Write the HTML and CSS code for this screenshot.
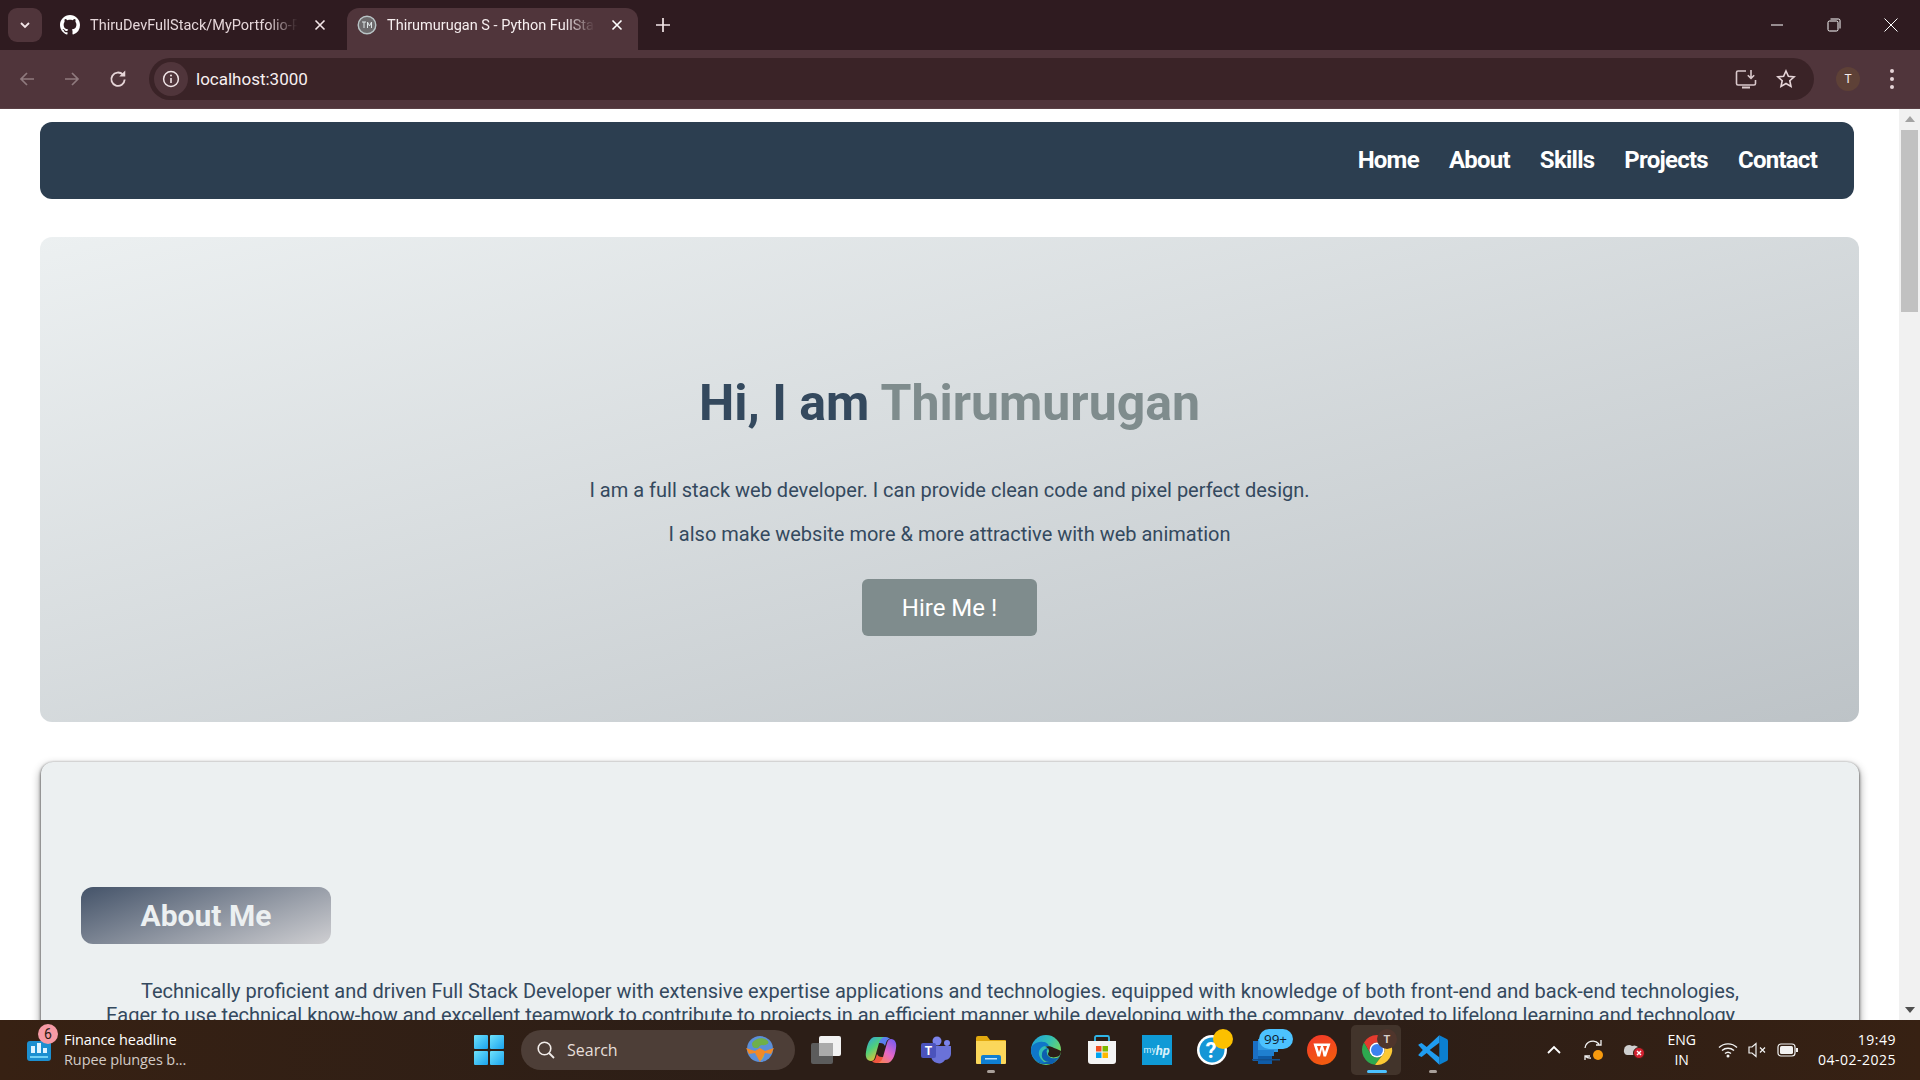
FILE: index.html
```html
<!DOCTYPE html>
<html lang="en">
<head>
    <meta charset="UTF-8">
    <meta name="viewport" content="width=device-width, initial-scale=1.0">
    <title>Thirumurugan S - Python FullStack</title>
    <link rel="stylesheet" href="styles.css">
</head>
<body>
    <!-- browser tabs -->
    <div class="tabstrip">
        <div class="tab-search">
            <svg width="12" height="12" viewBox="0 0 12 12"><path d="M2 4l4 4 4-4" fill="none" stroke="#f3e6e8" stroke-width="1.8"/></svg>
        </div>
        <div class="tab">
            <svg class="favicon" width="20" height="20" viewBox="0 0 16 16"><path fill="#fff" d="M8 0C3.58 0 0 3.58 0 8c0 3.54 2.29 6.53 5.47 7.59.4.07.55-.17.55-.38 0-.19-.01-.82-.01-1.49-2.01.37-2.53-.49-2.69-.94-.09-.23-.48-.94-.82-1.13-.28-.15-.68-.52-.01-.53.63-.01 1.08.58 1.23.82.72 1.21 1.87.87 2.33.66.07-.52.28-.87.51-1.07-1.78-.2-3.64-.89-3.64-3.95 0-.87.31-1.59.82-2.15-.08-.2-.36-1.02.08-2.12 0 0 .67-.21 2.2.82.64-.18 1.32-.27 2-.27s1.36.09 2 .27c1.53-1.04 2.2-.82 2.2-.82.44 1.1.16 1.92.08 2.12.51.56.82 1.27.82 2.15 0 3.07-1.87 3.75-3.65 3.95.29.25.54.73.54 1.48 0 1.07-.01 1.93-.01 2.2 0 .21.15.46.55.38A8.01 8.01 0 0 0 16 8c0-4.42-3.58-8-8-8z"/></svg>
            <span class="tab-title">ThiruDevFullStack/MyPortfolio-React</span>
            <svg class="tab-close" width="12" height="12" viewBox="0 0 12 12"><path d="M1.5 1.5l9 9M10.5 1.5l-9 9" stroke="#f3e6e8" stroke-width="1.6"/></svg>
        </div>
        <div class="tab tab-active">
            <svg class="favicon" width="20" height="20" viewBox="0 0 20 20"><circle cx="10" cy="10" r="8.8" fill="#6d6a6c" stroke="#b9c4c6" stroke-width="1.4"/><path d="M5 7h4M7 7v6M10.5 13V7l2 4 2-4v6" fill="none" stroke="#dfe5e6" stroke-width="1"/></svg>
            <span class="tab-title">Thirumurugan S - Python FullStack</span>
            <svg class="tab-close" width="12" height="12" viewBox="0 0 12 12"><path d="M1.5 1.5l9 9M10.5 1.5l-9 9" stroke="#fff" stroke-width="1.6"/></svg>
        </div>
        <svg class="new-tab" width="14" height="14" viewBox="0 0 14 14"><path d="M7 0v14M0 7h14" stroke="#f3e6e8" stroke-width="1.7"/></svg>
        <div class="win-controls">
            <svg width="14" height="14" viewBox="0 0 14 14"><path d="M1 7h12" stroke="#fff"/></svg>
            <svg width="14" height="14" viewBox="0 0 14 14"><rect x="1" y="3" width="10" height="10" rx="1.5" fill="none" stroke="#fff"/><path d="M3.5 1h8a1.5 1.5 0 0 1 1.5 1.5v8" fill="none" stroke="#fff"/></svg>
            <svg width="14" height="14" viewBox="0 0 14 14"><path d="M.5.5l13 13M13.5.5l-13 13" stroke="#fff"/></svg>
        </div>
    </div>

    <!-- address bar -->
    <div class="toolbar">
        <svg class="tool" width="18" height="18" viewBox="0 0 18 18"><path d="M16 9H3M9 3L3 9l6 6" fill="none" stroke="#8f7a7e" stroke-width="1.7"/></svg>
        <svg class="tool" width="18" height="18" viewBox="0 0 18 18"><path d="M2 9h13M9 3l6 6-6 6" fill="none" stroke="#8f7a7e" stroke-width="1.7"/></svg>
        <svg class="tool tool-reload" width="20" height="20" viewBox="0 0 18 18"><path d="M15 9.5a6 6 0 1 1-1.6-4.4" fill="none" stroke="#e6d5d8" stroke-width="1.7"/><path d="M15.5 1.3v5.4h-5.4z" fill="#e6d5d8"/></svg>
        <div class="omnibox">
            <div class="site-info">
                <svg width="18" height="18" viewBox="0 0 18 18"><circle cx="9" cy="9" r="7.4" fill="none" stroke="#f0e4e6" stroke-width="1.5"/><path d="M9 8v5" stroke="#f0e4e6" stroke-width="1.6"/><circle cx="9" cy="5.6" r="1" fill="#f0e4e6"/></svg>
            </div>
            <span class="url">localhost:3000</span>
            <svg class="omni-icon omni-install" width="22" height="20" viewBox="0 0 22 20"><path d="M11 2H3a1.5 1.5 0 0 0-1.5 1.5v11A1.5 1.5 0 0 0 3 16h16a1.5 1.5 0 0 0 1.5-1.5V11" fill="none" stroke="#d9c8cb" stroke-width="1.6"/><path d="M7 18.5h8" stroke="#d9c8cb" stroke-width="2"/><path d="M16 1v8M12.8 6.2L16 9.4l3.2-3.2" fill="none" stroke="#d9c8cb" stroke-width="1.6"/></svg>
            <svg class="omni-icon" width="20" height="20" viewBox="0 0 20 20"><path d="M10 2l2.4 5.3 5.7.6-4.3 3.8 1.2 5.7L10 14.500l-5 2.900 1.200-5.700L1.900 7.900l5.700-.6z" fill="none" stroke="#e6d5d8" stroke-width="1.6"/></svg>
        </div>
        <div class="avatar">T</div>
        <svg class="menu-dots" width="6" height="22" viewBox="0 0 6 22"><circle cx="3" cy="3" r="2" fill="#e6d5d8"/><circle cx="3" cy="11" r="2" fill="#e6d5d8"/><circle cx="3" cy="19" r="2" fill="#e6d5d8"/></svg>
    </div>

    <div class="viewport">
        <div class="page">
            <nav class="navbar">
                <a href="#">Home</a>
                <a href="#">About</a>
                <a href="#">Skills</a>
                <a href="#">Projects</a>
                <a href="#">Contact</a>
            </nav>

            <section class="hero">
                <h1>Hi, I am <span>Thirumurugan</span></h1>
                <p>I am a full stack web developer. I can provide clean code and pixel perfect design.</p>
                <p>I also make website more &amp; more attractive with web animation</p>
                <button class="hire-btn">Hire Me !</button>
            </section>

            <section class="about">
                <h2>About Me</h2>
                <p class="about-text">Technically proficient and driven Full Stack Developer with extensive expertise applications and technologies. equipped with knowledge of both front-end and back-end technologies,<br>
                Eager to use technical know-how and excellent teamwork to contribute to projects in an efficient manner while developing with the company. devoted to lifelong learning and technology</p>
            </section>
        </div>
        <div class="scrollbar">
            <svg width="10" height="6" viewBox="0 0 10 6"><path d="M5 0l5 6H0z" fill="#a3a3a3"/></svg>
            <div class="thumb"></div>
            <svg class="arrow-down" width="10" height="6" viewBox="0 0 10 6"><path d="M0 0h10L5 6z" fill="#505050"/></svg>
        </div>
    </div>

    <!-- windows taskbar -->
    <footer class="taskbar">
        <div class="widget">
            <div class="widget-icon">
                <svg width="26" height="24" viewBox="0 0 26 24"><rect x="1" y="3" width="24" height="20" rx="3" fill="#1c8fd0"/><rect x="5" y="8" width="4" height="7" fill="#dff4ff"/><rect x="11" y="5" width="4" height="10" fill="#dff4ff"/><rect x="17" y="10" width="4" height="5" fill="#dff4ff"/><rect x="4" y="18" width="18" height="2" fill="#6fd0f5"/></svg>
                <span class="widget-badge">6</span>
            </div>
            <div class="widget-text">
                <div class="widget-title">Finance headline</div>
                <div class="widget-sub">Rupee plunges b...</div>
            </div>
        </div>

        <div class="win-logo">
            <span></span><span></span><span></span><span></span>
        </div>

        <div class="searchbox">
            <svg width="20" height="20" viewBox="0 0 20 20"><circle cx="8.5" cy="8.5" r="6.3" fill="none" stroke="#f1ece9" stroke-width="1.6"/><path d="M13 13l5 5" stroke="#f1ece9" stroke-width="1.8"/></svg>
            <span class="search-label">Search</span>
            <svg class="search-globe" width="30" height="32" viewBox="0 0 30 32"><circle cx="15" cy="15" r="13" fill="#5b8fd8"/><path d="M7 9c4-6 12-6 16-2 2 3-3 5-6 4-3 0-3 4-6 3-3 0-4-2-4-5z" fill="#6fb04a"/><path d="M14 17c3-1 6 1 5 5-1 3-3 5-4 4-2-2-3-6-1-9z" fill="#8ec46a"/><path d="M1 14l9 3 5-3 5 3 9-3-3 6-6-1-5 9-5-9-6 1z" fill="#ef8a2a"/></svg>
        </div>

        <div class="apps">
            <div class="app">
                <svg width="30" height="30" viewBox="0 0 30 30"><rect x="0" y="8" width="22" height="21" rx="2" fill="#5c5c5c"/><rect x="8" y="1" width="22" height="20" rx="2" fill="#f2f2f2"/><rect x="8" y="8" width="14" height="13" fill="#ababab"/></svg>
            </div>
            <div class="app">
                <svg width="30" height="30" viewBox="0 0 30 30">
                    <defs>
                        <linearGradient id="copilotL" x1="0" y1="0" x2="0.6" y2="1"><stop offset="0" stop-color="#2f9fe8"/><stop offset=".5" stop-color="#4fd07a"/><stop offset="1" stop-color="#f7c02c"/></linearGradient>
                        <linearGradient id="copilotR" x1="0.8" y1="0" x2="0.2" y2="1"><stop offset="0" stop-color="#7a5cf0"/><stop offset=".55" stop-color="#e667c8"/><stop offset="1" stop-color="#f8825a"/></linearGradient>
                    </defs>
                    <path d="M12 2h8c2 0 3 1 4 2-2 0-3 1-4 4l-1 3c-1-2-2-3-5-3h-1z" fill="#5a7ff0"/>
                    <path d="M18 28h-8c-2 0-3-1-4-2 2 0 3-1 4-4l1-3c1 2 2 3 5 3h1z" fill="#f0563f"/>
                    <path d="M9 2c-5 0-8 7-9 15-1 5 1 9 5 9 2 0 3-1 4-4l4-14c1-3 2-5 5-6z" fill="url(#copilotL)"/>
                    <path d="M21 28c5 0 8-7 9-15 1-5-1-9-5-9-2 0-3 1-4 4l-4 14c-1 3-2 5-5 6z" fill="url(#copilotR)"/>
                </svg>
            </div>
            <div class="app">
                <svg width="30" height="30" viewBox="0 0 30 30"><circle cx="26" cy="8" r="3" fill="#7b83eb"/><circle cx="16" cy="6" r="4.5" fill="#7b83eb"/><path d="M10 11h20v8a6 6 0 0 1-6 6c-2 3-5 4-8 3-4-1-6-4-6-8z" fill="#6a72d8"/><rect x="0" y="8" width="15" height="15" rx="2" fill="#4b53bc"/><text x="7.5" y="20" class="teams-t">T</text></svg>
            </div>
            <div class="app app-open">
                <svg width="30" height="28" viewBox="0 0 30 28"><path d="M0 2a2 2 0 0 1 2-2h9l3 4h15a1 1 0 0 1 1 1v3H0z" fill="#e2a90f"/><path d="M0 5h30v22a1 1 0 0 1-1 1H1a1 1 0 0 1-1-1z" fill="#fbd75b"/><path d="M5 28v-7a2 2 0 0 1 2-2h16a2 2 0 0 1 2 2v7z" fill="#0f7fd2"/><rect x="9" y="22" width="12" height="1.5" fill="#bfe4fb"/></svg>
            </div>
            <div class="app">
                <svg width="30" height="30" viewBox="0 0 30 30">
                    <defs>
                        <linearGradient id="edgeTop" x1="0" y1="0" x2="1" y2="0.6"><stop offset="0" stop-color="#1b9de2"/><stop offset=".55" stop-color="#35c1b0"/><stop offset="1" stop-color="#7ed957"/></linearGradient>
                    </defs>
                    <circle cx="15" cy="15" r="15" fill="url(#edgeTop)"/>
                    <path d="M30 17.5c-1 5-4 9-9 11.5H15C7 30 0 23 0 15c0 8 6 13 12 12 5 0 7-1 9-1 4 0 7-3 9-8.5z" fill="#0d5fb0"/>
                    <path d="M0 15C0 10 6 6 12 7c3 0 6 2 6 5-3-2-6-1-8 1-3 3-3 8 1 12 1 1 2 2 4 3C7 29 0 23 0 15z" fill="#0f76c8"/>
                    <path d="M30 16c0 3-2 6-5 6-3 1-8 0-8-3 0-1 1-2 1-3 0-2-2-4-4-4 2-1 6-1 9 1 3 1 5 2 7 3z" fill="#2c1e17"/>
                    <path d="M30 18c-2 6-7 9-11 9-6 0-9-4-8-8 0-3 3-6 7-6-2 1-3 3-2 5 0 4 5 6 9 5 2 0 4-2 5-5z" fill="#0d5fb0"/>
                </svg>
            </div>
            <div class="app">
                <svg width="30" height="30" viewBox="0 0 30 30"><path d="M8 8V2.5A1.5 1.5 0 0 1 9.5 1h11A1.5 1.5 0 0 1 22 2.5V8" fill="none" stroke="#2fb6e8" stroke-width="1.8"/><path d="M1 6h28v20a3 3 0 0 1-3 3H4a3 3 0 0 1-3-3z" fill="#f4f4f4"/><rect x="9" y="11" width="5.5" height="5.5" fill="#f05022"/><rect x="15.5" y="11" width="5.5" height="5.5" fill="#7fba00"/><rect x="9" y="17.5" width="5.5" height="5.5" fill="#00a4ef"/><rect x="15.5" y="17.5" width="5.5" height="5.5" fill="#ffb900"/></svg>
            </div>
            <div class="app">
                <div class="myhp">my<i>hp</i></div>
            </div>
            <div class="app">
                <svg width="30" height="30" viewBox="0 0 30 30"><circle cx="15" cy="15" r="15" fill="#fff"/><circle cx="15" cy="15" r="12.5" fill="#1596d6"/><circle cx="26" cy="4" r="10" fill="#fcc000"/><text x="14" y="23" class="help-q">?</text></svg>
            </div>
            <div class="app">
                <svg width="30" height="30" viewBox="0 0 30 30"><rect x="1" y="6" width="8" height="20" fill="#1a6fc4"/><rect x="6" y="4" width="20" height="13" fill="#2f97e0"/><rect x="6" y="15" width="16" height="6" fill="#1f7fd0"/><rect x="6" y="21" width="14" height="8" fill="#0f5ca8"/><rect x="0" y="24" width="28" height="1.5" fill="#134f8c"/></svg>
                <span class="mail-badge">99+</span>
            </div>
            <div class="app">
                <svg width="30" height="30" viewBox="0 0 30 30">
                    <defs>
                        <linearGradient id="wps" x1="0" y1="0" x2="0.4" y2="1"><stop offset="0" stop-color="#f2372a"/><stop offset="1" stop-color="#f25a10"/></linearGradient>
                    </defs>
                    <circle cx="15" cy="15" r="15" fill="url(#wps)"/>
                    <path d="M6.5 8.5h17l-4.5 13h-2.500L15 14l-2 7.500h-2.500zM10 11l2 6 2-6zM16 11l2 6 2-6z" fill="#fff" fill-rule="evenodd"/>
                </svg>
            </div>
            <div class="app app-active">
                <svg width="30" height="30" viewBox="0 0 30 30"><path d="M2 7.5A15 15 0 0 1 28 7.5H15A7.5 7.5 0 0 0 8.5 18.75z" fill="#e33b2e"/><path d="M2 7.5L8.5 18.75A7.5 7.5 0 0 0 21.5 18.75L13 29.87A15 15 0 0 1 2 7.5z" fill="#2da94f"/><path d="M28 7.5H15A7.5 7.5 0 0 1 21.5 18.75L13 29.87A15 15 0 0 0 28 7.5z" fill="#fcc934"/><circle cx="15" cy="15" r="7.5" fill="#fff"/><circle cx="15" cy="15" r="6" fill="#3b82f0"/></svg>
                <span class="chrome-profile">T</span>
            </div>
            <div class="app app-open">
                <svg width="30" height="30" viewBox="0 0 100 100"><path d="M71 99l25-12c2-1 4-4 4-7V20c0-3-2-6-4-7L71 1z" fill="#0b7fd0"/><path d="M71 1L29 40 12 27l-9 4c-2 1-2 4 0 5l13 14L3 64c-2 1-2 4 0 5l9 4 17-13 42 39V74L39 50l32-24z" fill="#1f9cf0"/></svg>
            </div>
        </div>

        <div class="tray">
            <svg class="tray-icon chevron" width="16" height="10" viewBox="0 0 16 10"><path d="M2 8l6-6 6 6" fill="none" stroke="#fff" stroke-width="1.8"/></svg>
            <svg class="tray-icon sync" width="24" height="24" viewBox="0 0 24 24"><path d="M3 10a8 8 0 0 1 14-4M19 2v5h-5M3 22v-4h5M3 18a8 8 0 0 0 6 2" fill="none" stroke="#f2f2f2" stroke-width="1.3"/><circle cx="16" cy="17" r="5" fill="#f79a0e"/></svg>
            <svg class="tray-icon drive" width="24" height="20" viewBox="0 0 24 20"><path d="M2 10a5 5 0 0 1 8-4 6 6 0 0 1 7 2v7H5a4 4 0 0 1-3-5z" fill="#cfcfcf"/><circle cx="17" cy="13" r="5.5" fill="#d3202f" stroke="#362114"/><path d="M15 11l4 4M19 11l-4 4" stroke="#fff" stroke-width="1.4"/></svg>
            <div class="lang">ENG<br>IN</div>
            <svg class="tray-icon wifi" width="20" height="16" viewBox="0 0 20 16"><path d="M1 5.5a13 13 0 0 1 18 0M4 8.5a9 9 0 0 1 12 0M7 11.5a4.5 4.5 0 0 1 6 0" fill="none" stroke="#f2f2f2" stroke-width="1.4"/><circle cx="10" cy="14" r="1.5" fill="#f2f2f2"/></svg>
            <svg class="tray-icon volume" width="20" height="16" viewBox="0 0 20 16"><path d="M1 5h3l4-3.5v13L4 11H1z" fill="none" stroke="#f2f2f2" stroke-width="1.2"/><path d="M12 5.5l5 5M17 5.5l-5 5" stroke="#f2f2f2" stroke-width="1.2"/></svg>
            <svg class="tray-icon battery" width="22" height="14" viewBox="0 0 22 14"><rect x="1" y="1" width="17" height="12" rx="3" fill="none" stroke="#f2f2f2" stroke-width="1.2"/><rect x="3" y="3" width="13" height="8" rx="1.5" fill="#f2f2f2"/><path d="M20 5v4" stroke="#f2f2f2" stroke-width="2"/></svg>
            <div class="clock">19:49<br>04-02-2025</div>
        </div>
    </footer>
</body>
</html>
```

FILE: styles.css
```css
* {
    box-sizing: border-box;
}
body {
    margin: 0;
    height: 100vh;
    display: flex;
    flex-direction: column;
    overflow: hidden;
    font-family: Roboto, sans-serif;
    background-color: #fff;
}

/* browser chrome */
.tabstrip {
    height: 50px;
    flex: none;
    display: flex;
    align-items: flex-end;
    background-color: #2f1b20;
}
.tab-search {
    width: 34px;
    height: 34px;
    margin: 0 0 8px 8px;
    display: flex;
    align-items: center;
    justify-content: center;
    background-color: #50353b;
    border-radius: 9px;
}
.tab {
    width: 299px;
    height: 42px;
    padding: 0 15px 8px 18px;
    margin-right: 6px;
    display: flex;
    align-items: center;
    gap: 8px;
    color: #e5d6d9;
    font-size: 14.5px;
}
.tab-active {
    width: 291px;
    padding-left: 10px;
    margin-right: 0;
    background-color: #50353b;
    color: #f6eeef;
    border-radius: 12px 12px 0 0;
}
.favicon {
    flex: none;
    margin-right: 2px;
}
.tab-title {
    flex: 1;
    min-width: 0;
    overflow: hidden;
    white-space: nowrap;
    -webkit-mask-image: linear-gradient(to right, #000 84%, transparent 98%);
    mask-image: linear-gradient(to right, #000 84%, transparent 98%);
}
.tab-close {
    flex: none;
    margin-left: 4px;
}
.new-tab {
    margin: 0 0 18px 18px;
}
.win-controls {
    margin-left: auto;
    margin-bottom: 18px;
    padding-right: 22px;
    display: flex;
    gap: 43px;
}

.toolbar {
    height: 59px;
    flex: none;
    padding: 0 19px 1px 18px;
    display: flex;
    align-items: center;
    background-color: #50353b;
    border-bottom: 1px solid #5a4045;
}
.tool {
    margin-right: 27px;
    flex: none;
}
.tool-reload {
    margin-right: 25px;
}
.omnibox {
    width: 1665px;
    height: 42px;
    margin-left: -4px;
    padding: 0 18px 0 5px;
    display: flex;
    align-items: center;
    background-color: #3a2327;
    border-radius: 21px;
    flex: none;
}
.site-info {
    width: 34px;
    height: 34px;
    display: flex;
    align-items: center;
    justify-content: center;
    background-color: #50353b;
    border-radius: 50%;
}
.url {
    margin-left: 8px;
    color: #f7eff0;
    font-size: 17px;
}
.omni-icon {
    margin-left: 19px;
}
.omni-install {
    margin-left: auto;
}
.avatar {
    width: 24px;
    height: 24px;
    margin-left: 22px;
    display: flex;
    align-items: center;
    justify-content: center;
    background-color: #5e4137;
    border-radius: 50%;
    color: #f6eeef;
    font-size: 12px;
}
.menu-dots {
    margin-left: 29px;
    flex: none;
}

/* page */
.viewport {
    flex: 1;
    min-height: 0;
    display: flex;
    overflow: hidden;
}
.page {
    flex: 1;
    min-width: 0;
    padding: 13px 40px 0 40px;
    overflow: hidden;
}
.scrollbar {
    width: 21px;
    flex: none;
    display: flex;
    flex-direction: column;
    align-items: center;
    padding-top: 7px;
    background-color: #f1f1f1;
}
.thumb {
    width: 17px;
    height: 182px;
    margin-top: 8px;
    background-color: #c1c1c1;
}
.arrow-down {
    margin-top: auto;
    margin-bottom: 7px;
}

.navbar {
    height: 77px;
    margin-right: 5px;
    padding: 0 37px 2px 0;
    display: flex;
    align-items: center;
    justify-content: flex-end;
    gap: 30px;
    background-color: #2c3e50;
    border-radius: 12px;
}
.navbar a {
    color: #fff;
    font-size: 24px;
    font-weight: 700;
    letter-spacing: -0.75px;
    text-decoration: none;
}

.hero {
    height: 485px;
    margin-top: 38px;
    padding-top: 133px;
    text-align: center;
    color: #2c3e50;
    background: linear-gradient(to bottom right, #ecf0f1, #bdc3c7);
    border-radius: 12px;
}
.hero h1 {
    margin: 0 0 42px;
    font-size: 50px;
    line-height: 66px;
    font-weight: 700;
    color: #34495e;
}
.hero h1 span {
    color: #7f8c8d;
}
.hero p {
    margin: 0 0 20px;
    font-size: 20px;
    line-height: 24px;
    color: #34495e;
}
.hire-btn {
    width: 175px;
    height: 57px;
    margin-top: 13px;
    border: none;
    border-radius: 6px;
    background-color: #7f8c8d;
    color: #fff;
    font-family: Roboto, sans-serif;
    font-size: 24px;
}

.about {
    height: 400px;
    margin: 40px 0 0 1px;
    padding: 125px 40px 0;
    background-color: #ecf0f1;
    border-radius: 12px;
    box-shadow: 0 1px 3px rgba(0, 0, 0, 0.75), 0 4px 10px rgba(0, 0, 0, 0.45);
}
.about h2 {
    width: 250px;
    height: 57px;
    margin: 0 0 35px;
    display: flex;
    align-items: center;
    justify-content: center;
    font-size: 30px;
    font-weight: 700;
    color: #ecf0f1;
    background: linear-gradient(160deg, #445369, #cfcfd2);
    border-radius: 12px;
}
.about-text {
    margin: 0;
    padding-left: 25px;
    font-size: 20px;
    line-height: 24px;
    text-indent: 35px;
    color: #34495e;
    white-space: nowrap;
}

/* taskbar */
.taskbar {
    height: 60px;
    flex: none;
    display: flex;
    align-items: center;
    background: linear-gradient(to right, #372113 0%, #2c1e17 40%, #2c1e17 70%, #372113 100%);
    color: #fff;
}
.widget {
    width: 474px;
    padding-left: 26px;
    display: flex;
    align-items: center;
    gap: 12px;
    flex: none;
}
.widget-icon {
    position: relative;
    height: 24px;
}
.widget-badge {
    position: absolute;
    left: 12px;
    top: -14px;
    width: 20px;
    height: 20px;
    display: flex;
    align-items: center;
    justify-content: center;
    background-color: #f79aa5;
    border-radius: 50%;
    color: #2c1a12;
    font-size: 14px;
}
.widget-text {
    font-family: "Open Sans", sans-serif;
    font-size: 14.5px;
    line-height: 20px;
    letter-spacing: -0.1px;
}
.widget-sub {
    color: #d3cbc6;
}
.win-logo {
    width: 30px;
    height: 30px;
    flex: none;
    display: grid;
    grid-template-columns: 1fr 1fr;
    gap: 2px;
}
.win-logo span {
    background: linear-gradient(135deg, #6fe2fb, #1aa3ee);
    border-radius: 1px;
}
.searchbox {
    width: 274px;
    height: 40px;
    margin-left: 17px;
    padding-left: 15px;
    display: flex;
    align-items: center;
    flex: none;
    background-color: #4d3e37;
    border-radius: 20px;
    position: relative;
}
.search-label {
    margin-left: 11px;
    font-family: "Open Sans", sans-serif;
    font-size: 16px;
    color: #e6dfda;
}
.search-globe {
    position: absolute;
    left: 224px;
    top: 4px;
}
.apps {
    margin-left: 3px;
    display: flex;
    flex: none;
}
.app {
    width: 55.2px;
    height: 60px;
    display: flex;
    align-items: center;
    justify-content: center;
    position: relative;
}
.app svg {
    position: relative;
    overflow: visible;
}
.app-open::after,
.app-active::after {
    content: "";
    position: absolute;
    left: 50%;
    bottom: 7px;
    width: 8px;
    height: 3px;
    margin-left: -4px;
    border-radius: 2px;
    background-color: #a9a09a;
}
.app-active::before {
    content: "";
    position: absolute;
    left: 1px;
    top: 5px;
    width: 50px;
    height: 50px;
    background-color: #42342b;
    border-radius: 5px;
}
.app-active::after {
    width: 20px;
    margin-left: -10px;
    background-color: #4cc2ff;
}
.chrome-profile {
    position: absolute;
    left: 27px;
    top: 9px;
    width: 20px;
    height: 20px;
    display: flex;
    align-items: center;
    justify-content: center;
    background-color: #4f352c;
    border-radius: 50%;
    color: #d8cfca;
    font-size: 11px;
    font-weight: 700;
}
.mail-badge {
    position: absolute;
    left: 19px;
    top: 9px;
    width: 34px;
    height: 20px;
    display: flex;
    align-items: center;
    justify-content: center;
    background-color: #4cc2ff;
    border-radius: 10px;
    color: #10202e;
    font-family: "Open Sans", sans-serif;
    font-size: 13.5px;
}
.myhp {
    width: 30px;
    height: 30px;
    display: flex;
    align-items: center;
    justify-content: center;
    background-color: #0f9ad6;
    color: #d8f1fb;
    font-size: 9px;
}
.myhp i {
    font-size: 13px;
    font-weight: 700;
}
.teams-t {
    fill: #fff;
    font-family: Roboto, sans-serif;
    font-size: 12px;
    font-weight: 700;
    text-anchor: middle;
}
.help-q {
    fill: #fff;
    font-family: Roboto, sans-serif;
    font-size: 22px;
    font-weight: 700;
    text-anchor: middle;
}
.tray {
    flex: 1;
    padding-right: 24px;
    display: flex;
    align-items: center;
    justify-content: flex-end;
}
.tray-icon {
    flex: none;
}
.drive {
    margin-left: 16px;
}
.sync {
    margin-left: 20px;
}
.lang {
    margin: 0 22px 0 21px;
    font-family: "Open Sans", sans-serif;
    font-size: 14px;
    line-height: 20px;
    text-align: center;
}
.volume {
    margin-left: 10px;
}
.battery {
    margin-left: 9px;
}
.clock {
    margin-left: 19px;
    font-family: "Open Sans", sans-serif;
    font-size: 14px;
    line-height: 20px;
    letter-spacing: 0.5px;
    text-align: right;
}
```
